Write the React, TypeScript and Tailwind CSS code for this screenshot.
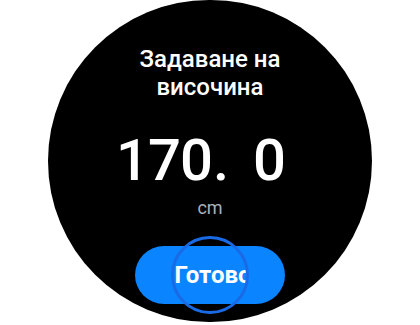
import * as React from "react"

export default function App() {
  return (
    <div className="w-[420px] h-[325px] bg-white flex justify-center overflow-hidden font-['Roboto','Noto_Sans',sans-serif]">
      <div className="w-[324px] h-[322px] shrink-0 rounded-full bg-black flex flex-col items-center pt-[45px]">
        <h1 className="text-white text-[24px] leading-[28px] font-medium text-center">
          Задаване на
          <br />
          височина
        </h1>
        <div className="mt-[30px] mr-[18px] flex items-baseline text-white text-[58px] leading-[58px] font-medium">
          <span className="tracking-[-1px]">170</span>
          <span className="ml-[1px]">.</span>
          <span className="ml-[24px]">0</span>
        </div>
        <div className="mt-[7px] text-[#aab2bd] text-[18px] leading-[24px]">cm</div>
        <button className="relative mt-[26px] w-[150px] h-[58px] rounded-full bg-[#0a84ff] flex items-center justify-center">
          <span className="w-[71px] overflow-hidden flex justify-center">
            <span className="translate-x-[3px] whitespace-nowrap text-white text-[24px] leading-[30px] font-bold">Готово</span>
          </span>
          <span className="absolute left-1/2 top-1/2 -translate-x-1/2 -translate-y-1/2 w-[78px] h-[78px] rounded-full border-[3px] border-[#1a6ae6]" />
        </button>
      </div>
    </div>
  )
}
